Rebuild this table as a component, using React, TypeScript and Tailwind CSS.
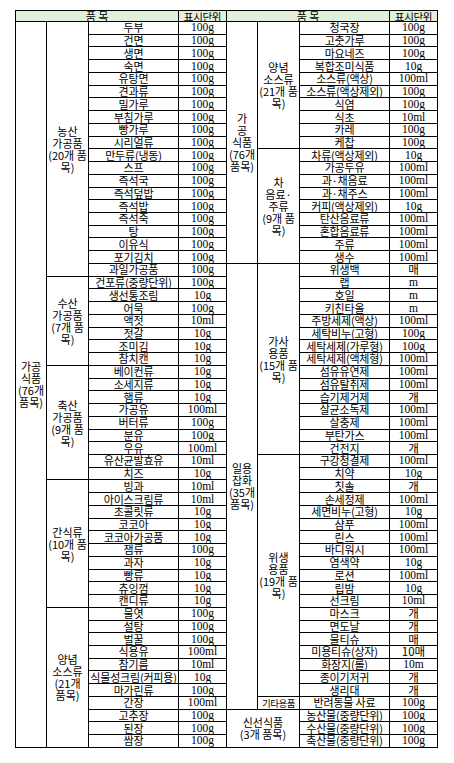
import React from "react";

type Item = [string, string];
type Group = { sub: string; items: Item[]; subSmall?: boolean };
type Section = { big: string; bigSpan2?: boolean; groups: Group[] };

const SPAN: Record<number, string> = {
  1: "row-span-1",
  3: "row-span-3",
  7: "row-span-7",
  9: "row-span-9",
  10: "row-span-10",
  11: "row-span-11",
  15: "row-span-15",
  19: "row-span-19",
  20: "row-span-20",
  35: "row-span-35",
  57: "row-span-57",
};

const kr = "font-['Noto_Sans_CJK_KR','Noto_Sans',sans-serif]";
const serif = "font-['Liberation_Serif','Noto_Sans_CJK_KR',serif]";
const base =
  "border-r border-b border-black flex items-center justify-center text-center whitespace-nowrap overflow-visible text-black";

const left: Section[] = [
  {
    big: "가공\n식품\n(76개\n품목)",
    groups: [
      {
        sub: "농산\n가공품\n(20개 품\n목)",
        items: [
          ["두부", "100g"],
          ["건면", "100g"],
          ["생면", "100g"],
          ["숙면", "100g"],
          ["유탕면", "100g"],
          ["견과류", "100g"],
          ["밀가루", "100g"],
          ["부침가루", "100g"],
          ["빵가루", "100g"],
          ["시리얼류", "100g"],
          ["만두류(냉동)", "100g"],
          ["스프", "100g"],
          ["즉석국", "100g"],
          ["즉석덮밥", "100g"],
          ["즉석밥", "100g"],
          ["즉석죽", "100g"],
          ["탕", "100g"],
          ["이유식", "100g"],
          ["포기김치", "100g"],
          ["과일가공품", "100g"],
        ],
      },
      {
        sub: "수산\n가공품\n(7개 품\n목)",
        items: [
          ["건포류(중량단위)", "100g"],
          ["생선통조림", "10g"],
          ["어묵", "100g"],
          ["액젓", "10ml"],
          ["젓갈", "10g"],
          ["조미김", "10g"],
          ["참치캔", "10g"],
        ],
      },
      {
        sub: "축산\n가공품\n(9개 품\n목)",
        items: [
          ["베이컨류", "10g"],
          ["소세지류", "10g"],
          ["햄류", "10g"],
          ["가공유", "100ml"],
          ["버터류", "100g"],
          ["분유", "100g"],
          ["우유", "100ml"],
          ["유산균발효유", "10ml"],
          ["치즈", "10g"],
        ],
      },
      {
        sub: "간식류\n(10개 품\n목)",
        items: [
          ["빙과", "10ml"],
          ["아이스크림류", "10ml"],
          ["초콜릿류", "10g"],
          ["코코아", "10g"],
          ["코코아가공품", "10g"],
          ["잼류", "100g"],
          ["과자", "10g"],
          ["빵류", "10g"],
          ["츄잉껌", "10g"],
          ["캔디류", "10g"],
        ],
      },
      {
        sub: "양념\n소스류\n(21개\n품목)",
        items: [
          ["물엿", "100g"],
          ["설탕", "100g"],
          ["벌꿀", "100g"],
          ["식용유", "100ml"],
          ["참기름", "10ml"],
          ["식물성크림(커피용)", "10g"],
          ["마가린류", "100g"],
          ["간장", "100ml"],
          ["고추장", "100g"],
          ["된장", "100g"],
          ["쌈장", "100g"],
        ],
      },
    ],
  },
];

const right: Section[] = [
  {
    big: "가\n공\n식품\n(76개\n품목)",
    groups: [
      {
        sub: "양념\n소스류\n(21개 품\n목)",
        items: [
          ["청국장", "100g"],
          ["고춧가루", "100g"],
          ["마요네즈", "100g"],
          ["복합조미식품", "10g"],
          ["소스류(액상)", "100ml"],
          ["소스류(액상제외)", "100g"],
          ["식염", "100g"],
          ["식초", "10ml"],
          ["카레", "100g"],
          ["케찹", "100g"],
        ],
      },
      {
        sub: "차\n음료·\n주류\n(9개 품\n목)",
        items: [
          ["차류(액상제외)", "10g"],
          ["가공두유", "100ml"],
          ["과·채음료", "100ml"],
          ["과·채주스", "100ml"],
          ["커피(액상제외)", "10g"],
          ["탄산음료류", "100ml"],
          ["혼합음료류", "100ml"],
          ["주류", "100ml"],
          ["생수", "100ml"],
        ],
      },
    ],
  },
  {
    big: "일용\n잡화\n(35개\n품목)",
    groups: [
      {
        sub: "가사\n용품\n(15개 품\n목)",
        items: [
          ["위생백", "매"],
          ["랩", "m"],
          ["호일", "m"],
          ["키친타올", "m"],
          ["주방세제(액상)", "100ml"],
          ["세탁비누(고형)", "100g"],
          ["세탁세제(가루형)", "100g"],
          ["세탁세제(액체형)", "100ml"],
          ["섬유유연제", "100ml"],
          ["섬유탈취제", "100ml"],
          ["습기제거제", "개"],
          ["살균소독제", "100ml"],
          ["살충제", "100ml"],
          ["부탄가스", "100ml"],
          ["건전지", "개"],
        ],
      },
      {
        sub: "위생\n용품\n(19개 품\n목)",
        items: [
          ["구강청결제", "100ml"],
          ["치약", "10g"],
          ["칫솔", "개"],
          ["손세정제", "100ml"],
          ["세면비누(고형)", "10g"],
          ["샴푸", "100ml"],
          ["린스", "100ml"],
          ["바디워시", "100ml"],
          ["염색약", "10g"],
          ["로션", "100ml"],
          ["립밤", "10g"],
          ["선크림", "10ml"],
          ["마스크", "개"],
          ["면도날", "개"],
          ["물티슈", "매"],
          ["미용티슈(상자)", "10매"],
          ["화장지(롤)", "10m"],
          ["종이기저귀", "개"],
          ["생리대", "개"],
        ],
      },
      {
        sub: "기타용품",
        subSmall: true,
        items: [["반려동물 사료", "100g"]],
      },
    ],
  },
  {
    big: "신선식품\n(3개 품목)",
    bigSpan2: true,
    groups: [
      {
        sub: "",
        items: [
          ["농산물(중량단위)", "100g"],
          ["수산물(중량단위)", "100g"],
          ["축산물(중량단위)", "100g"],
        ],
      },
    ],
  },
];

function Multi({ text }: { text: string }) {
  const lines = text.split("\n");
  return (
    <div className="flex flex-col items-center leading-[12px]">
      {lines.map((l, i) => (
        <span key={i}>{l}</span>
      ))}
    </div>
  );
}

function Table({
  sections,
  cols,
  first,
}: {
  sections: Section[];
  cols: string;
  first?: boolean;
}) {
  const cells: React.ReactNode[] = [];
  cells.push(
    <div
      key="h1"
      className={`${base} col-span-3 col-start-1 bg-[#e2efda] ${kr} text-[11px] leading-[11px]`}
    >
      품 목
    </div>
  );
  cells.push(
    <div
      key="h2"
      className={`${base} col-start-4 bg-[#e2efda] ${kr} text-[10.5px] leading-[11px] tracking-[-0.3px]`}
    >
      표시단위
    </div>
  );
  sections.forEach((s, si) => {
    const total = s.groups.reduce((a, g) => a + g.items.length, 0);
    cells.push(
      <div
        key={`b${si}`}
        className={`${base} col-start-1 ${s.bigSpan2 ? "col-span-2" : ""} ${SPAN[total]} ${kr} text-[11px]`}
      >
        <Multi text={s.big} />
      </div>
    );
    s.groups.forEach((g, gi) => {
      if (!s.bigSpan2) {
        cells.push(
          <div
            key={`s${si}-${gi}`}
            className={`${base} col-start-2 ${SPAN[g.items.length]} ${kr} ${
              g.subSmall ? "text-[9.5px] tracking-[-0.5px] leading-[11px]" : "text-[11px]"
            }`}
          >
            <Multi text={g.sub} />
          </div>
        );
      }
      g.items.forEach(([name, unit], ii) => {
        cells.push(
          <div
            key={`i${si}-${gi}-${ii}`}
            className={`${base} col-start-3 ${kr} text-[11px] leading-[11px] tracking-[-0.2px]`}
          >
            {name}
          </div>
        );
        cells.push(
          <div
            key={`u${si}-${gi}-${ii}`}
            className={`${base} col-start-4 ${
              /^[0-9a-z]+$/.test(unit) ? serif : kr
            } text-[11.5px] leading-[11px]`}
          >
            {unit}
          </div>
        );
      });
    });
  });
  return (
    <div
      className={`grid ${cols} grid-rows-[11px_repeat(57,12.74px)] border-t border-black ${
        first ? "border-l" : ""
      }`}
    >
      {cells}
    </div>
  );
}

export default function App() {
  return (
    <div className="w-[454px] h-[763px] bg-white pt-[10px] pl-[15px] flex flex-row items-start">
      <Table sections={left} cols="grid-cols-[31px_42px_90px_48px]" first />
      <Table sections={right} cols="grid-cols-[31px_42px_90px_48px]" />
    </div>
  );
}
